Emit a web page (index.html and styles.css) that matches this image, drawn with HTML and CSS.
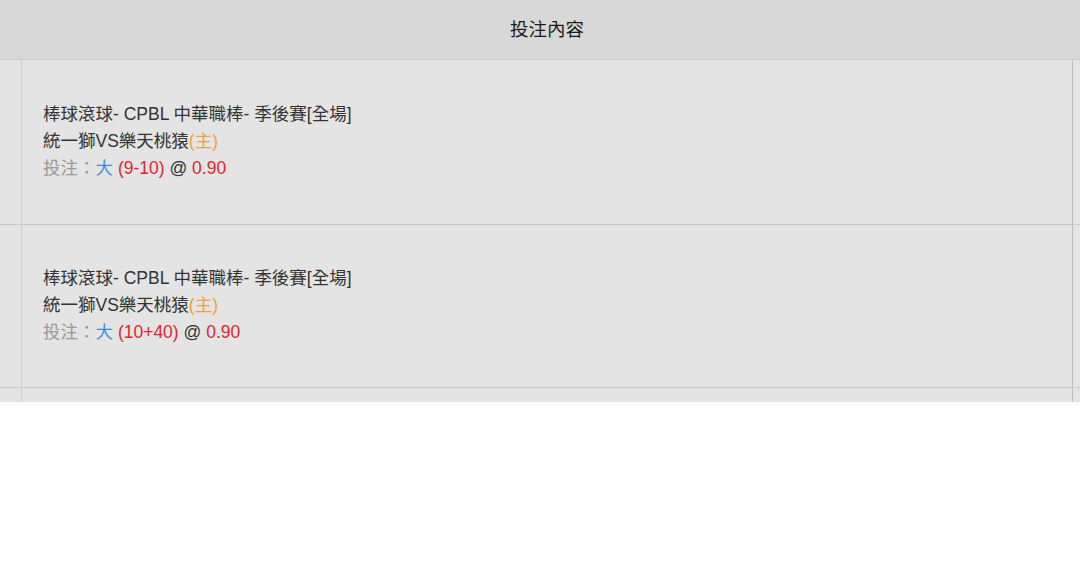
FILE: index.html
```html
<!DOCTYPE html>
<html lang="zh-Hant">
<head>
  <meta charset="UTF-8">
  <meta name="viewport" content="width=device-width, initial-scale=1.0">
  <title>投注內容</title>
  <link rel="stylesheet" href="styles.css">
</head>
<body>
  <div class="bet-table">
    <div class="bet-head">投注內容</div>

    <div class="bet-list">
      <div class="bet-row">
        <div class="side-cell"></div>
        <div class="bet-cell">
          <p class="bet-line">棒球滾球- CPBL 中華職棒- 季後賽[全場]</p>
          <p class="bet-line">統一獅VS樂天桃猿<span class="home">(主)</span></p>
          <p class="bet-line"><span class="label">投注：</span><span class="pick">大</span> <span class="red">(9-10)</span> @ <span class="red">0.90</span></p>
        </div>
        <div class="side-cell side-right"></div>
      </div>

      <div class="bet-row">
        <div class="side-cell"></div>
        <div class="bet-cell">
          <p class="bet-line">棒球滾球- CPBL 中華職棒- 季後賽[全場]</p>
          <p class="bet-line">統一獅VS樂天桃猿<span class="home">(主)</span></p>
          <p class="bet-line"><span class="label">投注：</span><span class="pick">大</span> <span class="red">(10+40)</span> @ <span class="red">0.90</span></p>
        </div>
        <div class="side-cell side-right"></div>
      </div>

      <div class="bet-row">
        <div class="side-cell"></div>
        <div class="bet-cell">
          <p class="bet-line">棒球滾球- CPBL 中華職棒- 季後賽[全場]</p>
          <p class="bet-line">統一獅VS樂天桃猿<span class="home">(主)</span></p>
          <p class="bet-line"><span class="label">投注：</span><span class="pick">大</span> <span class="red">(9-10)</span> @ <span class="red">0.90</span></p>
        </div>
        <div class="side-cell side-right"></div>
      </div>
    </div>
  </div>
</body>
</html>
```

FILE: styles.css
```css
/* Global */
body {
  margin: 0;
  padding: 0;
  background-color: #fff;
  font-family: "Liberation Sans", "Noto Sans CJK TC", Arial, sans-serif;
  color: #333;
}

/* Header */
.bet-head {
  height: 60px;
  box-sizing: border-box;
  padding: 0 9px 4px 23px;
  background-color: #d8d8d8;
  border-bottom: 1px solid #c8c8c8;
  display: flex;
  align-items: center;
  justify-content: center;
  font-family: "Noto Sans CJK TC", sans-serif;
  font-size: 18.5px;
  color: #1a1a1a;
}

/* Rows */
.bet-list {
  height: 342px;
  overflow: hidden;
  background-color: #e4e4e4;
}

.bet-row {
  display: grid;
  grid-template-columns: 22px 1fr 8px;
  height: 163px;
  box-sizing: border-box;
  border-bottom: 1px solid #c8c8c8;
}

.bet-row:first-child {
  height: 165px;
}

.side-cell {
  border-right: 1px solid #cdcdcd;
}

.side-right {
  border-right: none;
  border-left: 1px solid #bdbdbd;
}

.bet-cell {
  display: flex;
  flex-direction: column;
  justify-content: center;
  padding: 0 0 2px 21px;
}

.bet-line {
  margin: 0;
  font-size: 17.5px;
  line-height: 27px;
  color: #333;
}

.home {
  color: #f0a040;
}

.label {
  color: #999;
}

.pick {
  color: #3d8fe0;
}

.red {
  color: #e0262f;
}
```
